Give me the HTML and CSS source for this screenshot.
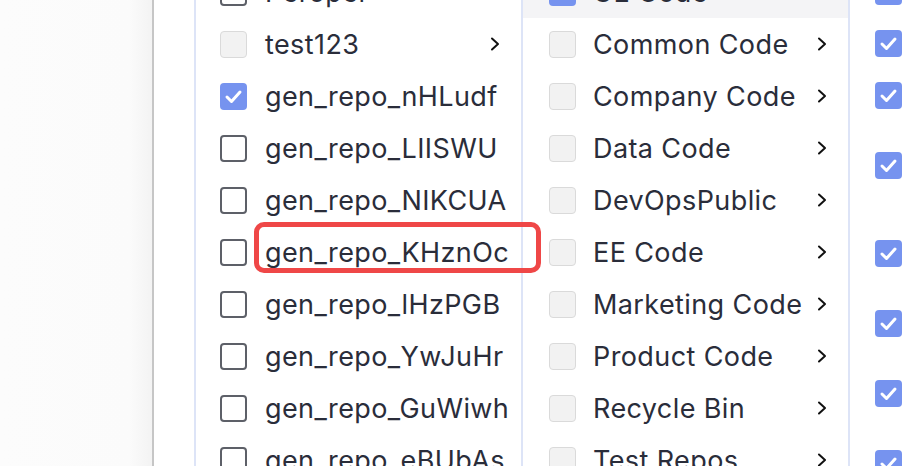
FILE: index.html
```html
<!DOCTYPE html>
<html lang="en">
<head>
<meta charset="utf-8">
<title>Repository picker</title>
<link rel="stylesheet" href="styles.css">
</head>
<body>
<div class="page">
  <div class="backdrop"></div>
  <div class="panel">
    <div class="column col-repos">
      <div class="row"><span class="box"></span><span class="label">Peropel</span><span class="chev"><svg viewBox="0 0 10 14"><polyline points="2,1.5 8,7 2,12.5"/></svg></span></div>
      <div class="row"><span class="box disabled"></span><span class="label">test123</span><span class="chev"><svg viewBox="0 0 10 14"><polyline points="2,1.5 8,7 2,12.5"/></svg></span></div>
      <div class="row"><span class="box checked"><svg viewBox="0 0 27 27"><polyline points="7,14 11.5,18.5 20,9"/></svg></span><span class="label">gen_repo_nHLudf</span></div>
      <div class="row"><span class="box"></span><span class="label">gen_repo_LIISWU</span></div>
      <div class="row"><span class="box"></span><span class="label">gen_repo_NIKCUA</span></div>
      <div class="row"><span class="box"></span><span class="label">gen_repo_KHznOc</span></div>
      <div class="row"><span class="box"></span><span class="label">gen_repo_lHzPGB</span></div>
      <div class="row"><span class="box"></span><span class="label">gen_repo_YwJuHr</span></div>
      <div class="row"><span class="box"></span><span class="label">gen_repo_GuWiwh</span></div>
      <div class="row"><span class="box"></span><span class="label">gen_repo_eBUbAs</span></div>
    </div>
    <div class="column col-groups">
      <div class="row hover"><span class="box checked"><svg viewBox="0 0 27 27"><polyline points="7,14 11.5,18.5 20,9"/></svg></span><span class="label">UE Code</span><span class="chev"><svg viewBox="0 0 10 14"><polyline points="2,1.5 8,7 2,12.5"/></svg></span></div>
      <div class="row"><span class="box disabled"></span><span class="label">Common Code</span><span class="chev"><svg viewBox="0 0 10 14"><polyline points="2,1.5 8,7 2,12.5"/></svg></span></div>
      <div class="row"><span class="box disabled"></span><span class="label">Company Code</span><span class="chev"><svg viewBox="0 0 10 14"><polyline points="2,1.5 8,7 2,12.5"/></svg></span></div>
      <div class="row"><span class="box disabled"></span><span class="label">Data Code</span><span class="chev"><svg viewBox="0 0 10 14"><polyline points="2,1.5 8,7 2,12.5"/></svg></span></div>
      <div class="row"><span class="box disabled"></span><span class="label">DevOpsPublic</span><span class="chev"><svg viewBox="0 0 10 14"><polyline points="2,1.5 8,7 2,12.5"/></svg></span></div>
      <div class="row"><span class="box disabled"></span><span class="label">EE Code</span><span class="chev"><svg viewBox="0 0 10 14"><polyline points="2,1.5 8,7 2,12.5"/></svg></span></div>
      <div class="row"><span class="box disabled"></span><span class="label">Marketing Code</span><span class="chev"><svg viewBox="0 0 10 14"><polyline points="2,1.5 8,7 2,12.5"/></svg></span></div>
      <div class="row"><span class="box disabled"></span><span class="label">Product Code</span><span class="chev"><svg viewBox="0 0 10 14"><polyline points="2,1.5 8,7 2,12.5"/></svg></span></div>
      <div class="row"><span class="box disabled"></span><span class="label">Recycle Bin</span><span class="chev"><svg viewBox="0 0 10 14"><polyline points="2,1.5 8,7 2,12.5"/></svg></span></div>
      <div class="row"><span class="box disabled"></span><span class="label">Test Repos</span><span class="chev"><svg viewBox="0 0 10 14"><polyline points="2,1.5 8,7 2,12.5"/></svg></span></div>
    </div>
    <div class="column col-items">
      <div class="item h52"><span class="box checked"><svg viewBox="0 0 27 27"><polyline points="7,14 11.5,18.5 20,9"/></svg></span></div>
      <div class="item h52"><span class="box checked"><svg viewBox="0 0 27 27"><polyline points="7,14 11.5,18.5 20,9"/></svg></span></div>
      <div class="item h70"><span class="box checked"><svg viewBox="0 0 27 27"><polyline points="7,14 11.5,18.5 20,9"/></svg></span></div>
      <div class="item h88"><span class="box checked"><svg viewBox="0 0 27 27"><polyline points="7,14 11.5,18.5 20,9"/></svg></span></div>
      <div class="item h70"><span class="box checked"><svg viewBox="0 0 27 27"><polyline points="7,14 11.5,18.5 20,9"/></svg></span></div>
      <div class="item h70"><span class="box checked"><svg viewBox="0 0 27 27"><polyline points="7,14 11.5,18.5 20,9"/></svg></span></div>
      <div class="item h70"><span class="box checked"><svg viewBox="0 0 27 27"><polyline points="7,14 11.5,18.5 20,9"/></svg></span></div>
      <div class="item h70"><span class="box checked"><svg viewBox="0 0 27 27"><polyline points="7,14 11.5,18.5 20,9"/></svg></span></div>
    </div>
  </div>
  <div class="highlight"></div>
</div>
</body>
</html>
```

FILE: styles.css
```css
* { box-sizing: border-box; }
html, body {
  margin: 0;
  padding: 0;
  width: 920px;
  height: 466px;
  overflow: hidden;
  background: #fbfbfb;
  font-family: Inter, "Noto Sans", sans-serif;
}
.page {
  position: relative;
  display: flex;
  width: 920px;
  height: 466px;
}
.backdrop {
  width: 152px;
  flex: none;
  background: linear-gradient(to right, #fcfcfc 0, #fbfbfb 85%, #f3f3f3 100%);
}
.panel {
  flex: 1;
  display: flex;
  background: #fff;
  border-left: 2px solid #c6c6c6;
  padding-left: 40px;
  overflow: hidden;
}
.column {
  flex: none;
  width: 327px;
  border-left: 2px solid #dde4f7;
  margin-top: -34px;
  display: flex;
  flex-direction: column;
}
.col-items {
  flex: 1;
  width: auto;
}
.row {
  flex: none;
  height: 52px;
  display: flex;
  align-items: center;
  padding-right: 21px;
}
.col-repos .row { padding-left: 24px; }
.col-groups .row { padding-left: 26px; }
.row.hover { background: #f4f4f6; }
.box {
  flex: none;
  width: 27px;
  height: 27px;
  border: 2px solid #5d6068;
  border-radius: 4px;
  background: #fff;
  display: flex;
  align-items: center;
  justify-content: center;
}
.box.disabled {
  background: #f2f2f2;
  border: 1.5px solid #dadada;
}
.box.checked {
  background: #7693ef;
  border: none;
}
.box svg {
  width: 27px;
  height: 27px;
  fill: none;
  stroke: #fff;
  stroke-width: 3;
  stroke-linecap: round;
  stroke-linejoin: round;
}
.label {
  margin-left: 18px;
  font-size: 27px;
  color: #2a2d3a;
  white-space: nowrap;
  letter-spacing: 0.4px;
}
.col-groups .label { margin-left: 17px; }
.chev {
  margin-left: auto;
  width: 10px;
  height: 14px;
  display: flex;
}
.chev svg {
  width: 10px;
  height: 14px;
  fill: none;
  stroke: #111;
  stroke-width: 2;
  stroke-linecap: round;
  stroke-linejoin: round;
}
.item {
  flex: none;
  padding-left: 25px;
  padding-top: 12px;
}
.h52 { height: 52px; }
.h70 { height: 70px; }
.h88 { height: 88px; }
.highlight {
  position: absolute;
  left: 254px;
  top: 222px;
  width: 287px;
  height: 51px;
  border: 5px solid #ef4747;
  border-radius: 10px;
}
```
